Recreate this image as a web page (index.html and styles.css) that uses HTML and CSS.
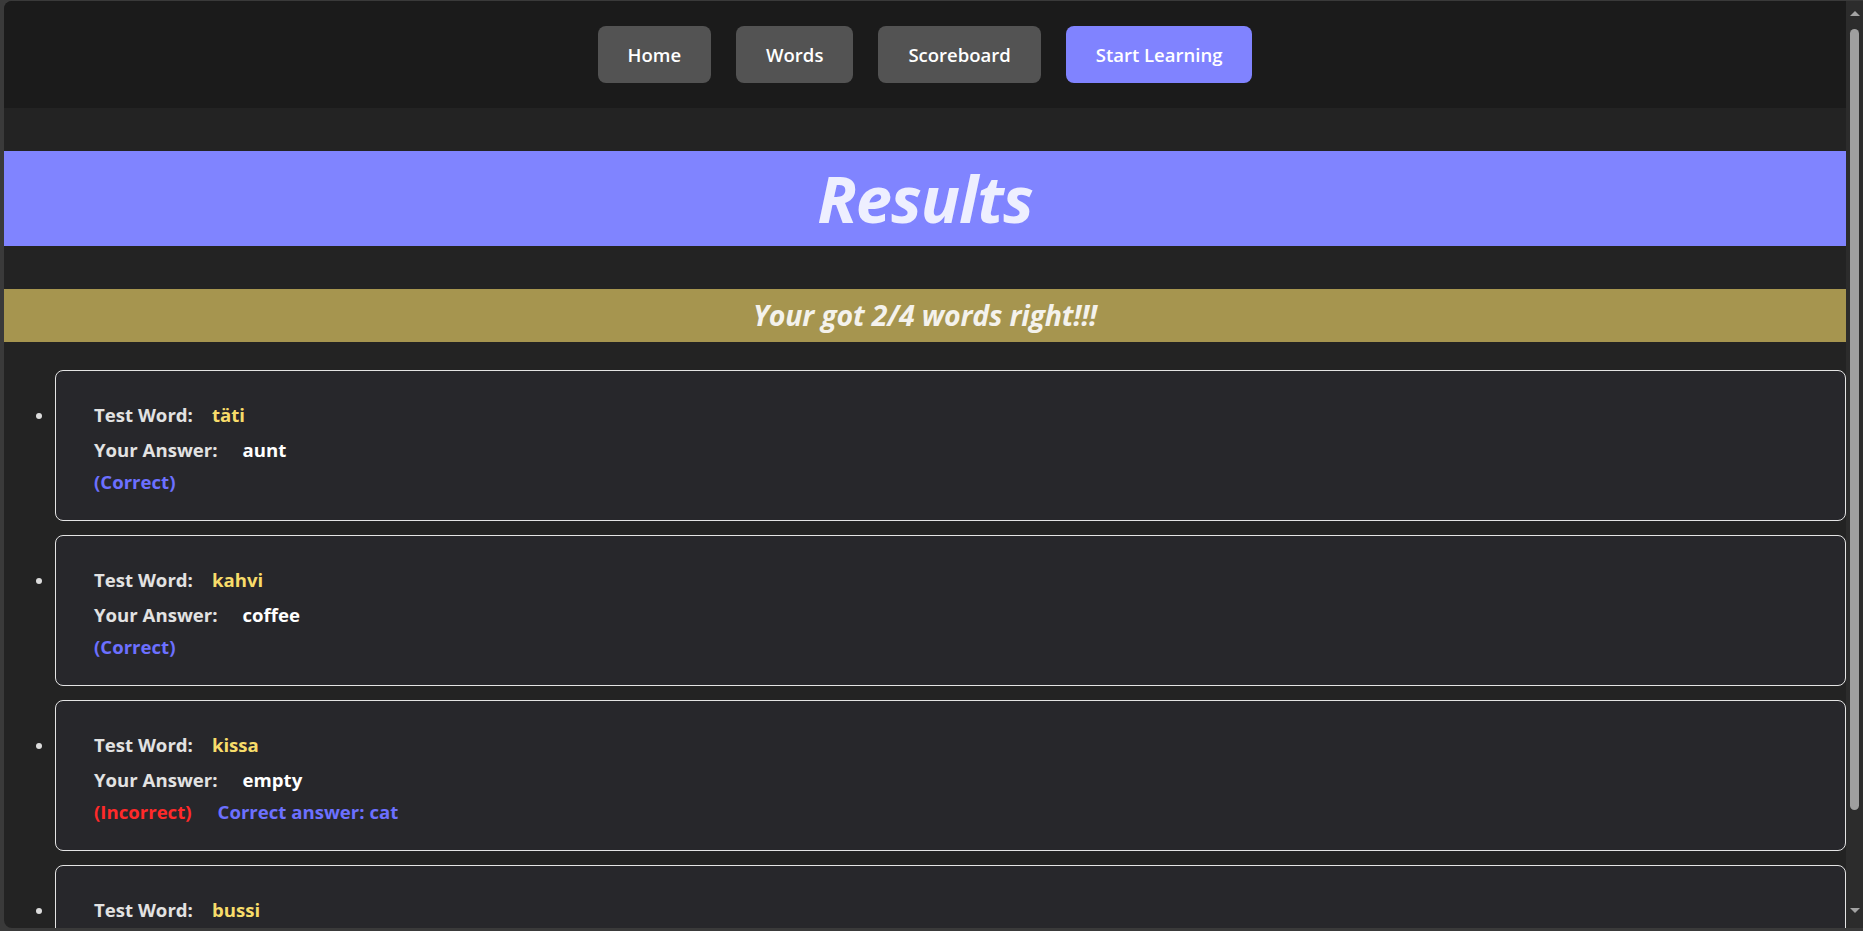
FILE: index.html
```html
<!DOCTYPE html>
<html lang="en">
<head>
<meta charset="utf-8">
<title>Results</title>
<link rel="stylesheet" href="styles.css">
</head>
<body>
<div class="frame">
  <div class="viewport">
    <nav class="nav">
      <a class="btn">Home</a>
      <a class="btn">Words</a>
      <a class="btn">Scoreboard</a>
      <a class="btn btn-primary">Start Learning</a>
    </nav>
    <main class="main">
      <h1 class="title">Results</h1>
      <h2 class="score">Your got 2/4 words right!!!</h2>
      <ul class="results">
        <li>
          <div class="card">
            <div class="row row-word"><span class="label">Test Word:</span><span class="word">täti</span></div>
            <div class="row row-answer"><span class="label">Your Answer:</span><span class="answer">aunt</span></div>
            <div class="row"><span class="ok">(Correct)</span></div>
          </div>
        </li>
        <li>
          <div class="card">
            <div class="row row-word"><span class="label">Test Word:</span><span class="word">kahvi</span></div>
            <div class="row row-answer"><span class="label">Your Answer:</span><span class="answer">coffee</span></div>
            <div class="row"><span class="ok">(Correct)</span></div>
          </div>
        </li>
        <li>
          <div class="card">
            <div class="row row-word"><span class="label">Test Word:</span><span class="word">kissa</span></div>
            <div class="row row-answer"><span class="label">Your Answer:</span><span class="answer">empty</span></div>
            <div class="row"><span class="bad">(Incorrect)</span><span class="fix">Correct answer: cat</span></div>
          </div>
        </li>
        <li>
          <div class="card">
            <div class="row row-word"><span class="label">Test Word:</span><span class="word">bussi</span></div>
            <div class="row row-answer"><span class="label">Your Answer:</span><span class="answer">empty</span></div>
            <div class="row"><span class="bad">(Incorrect)</span><span class="fix">Correct answer: bus</span></div>
          </div>
        </li>
      </ul>
    </main>
  </div>
  <div class="scrollbar">
    <span class="arrow arrow-up"></span>
    <div class="thumb"></div>
    <span class="arrow arrow-down"></span>
  </div>
</div>
</body>
</html>
```
FILE: styles.css
```css
html, body {
  margin: 0;
  padding: 0;
  height: 931px;
  overflow: hidden;
  background: #3a3a3a;
  font-family: "Open Sans", "Noto Sans", "DejaVu Sans", sans-serif;
}

.frame {
  display: flex;
  height: 927px;
  margin: 1px 0 3px 4px;
  border-radius: 8px 0 0 8px;
  overflow: hidden;
}

.viewport {
  flex: 1;
  background: #232323;
  overflow: hidden;
}

.nav {
  height: 107px;
  background: #1b1b1b;
  display: flex;
  align-items: center;
  justify-content: center;
  gap: 25px;
}

.btn {
  display: flex;
  align-items: center;
  height: 57px;
  padding: 0 30px;
  border-radius: 8px;
  background: #535353;
  color: #ffffff;
  font-size: 18.5px;
  font-weight: 600;
  box-sizing: border-box;
}

.btn-primary {
  background: #8083ff;
}

.main {
  padding-top: 43px;
}

.title {
  margin: 0;
  height: 95px;
  line-height: 95px;
  background: #8084ff;
  color: #eeefff;
  text-align: center;
  font-size: 65px;
  font-weight: 700;
  font-style: italic;
  letter-spacing: -1px;
}

.score {
  margin: 43px 0 0;
  height: 53px;
  line-height: 53px;
  background: #a6954f;
  color: #f4f2ec;
  text-align: center;
  font-size: 28.5px;
  font-weight: 700;
  font-style: italic;
  letter-spacing: -0.2px;
}

.results {
  list-style: disc;
  margin: 28px 0 0;
  padding: 0 0 0 51px;
  color: #dcdcdc;
  font-size: 17px;
}

.results li {
  margin-bottom: 14px;
}

.card {
  background: #27272b;
  border: 1px solid #e4e4e4;
  border-radius: 8px;
  padding: 32px 38px 26px;
  height: 151px;
  box-sizing: border-box;
}

.row {
  display: flex;
  height: 24px;
  line-height: 24px;
  font-size: 18.6px;
  font-weight: 700;
}

.row-word {
  margin-bottom: 11px;
}

.row-answer {
  margin-bottom: 8px;
}

.label {
  color: #e2e2e2;
}

.word {
  color: #f7dc6a;
  margin-left: 19px;
}

.answer {
  color: #ffffff;
  margin-left: 25px;
}

.ok {
  color: #6c70ff;
}

.bad {
  color: #ff2a2a;
}

.fix {
  color: #6c70ff;
  margin-left: 26px;
}

.scrollbar {
  width: 17px;
  background: #2c2c2c;
  display: flex;
  flex-direction: column;
  align-items: center;
}

.arrow {
  width: 0;
  height: 0;
  border-left: 5px solid transparent;
  border-right: 5px solid transparent;
}

.arrow-up {
  margin-top: 10px;
  border-bottom: 5px solid #a3a3a3;
}

.thumb {
  margin-top: 13px;
  width: 9px;
  height: 781px;
  border-radius: 5px;
  background: #9f9f9f;
}

.arrow-down {
  margin-top: 98px;
  border-top: 5px solid #a3a3a3;
}
```
